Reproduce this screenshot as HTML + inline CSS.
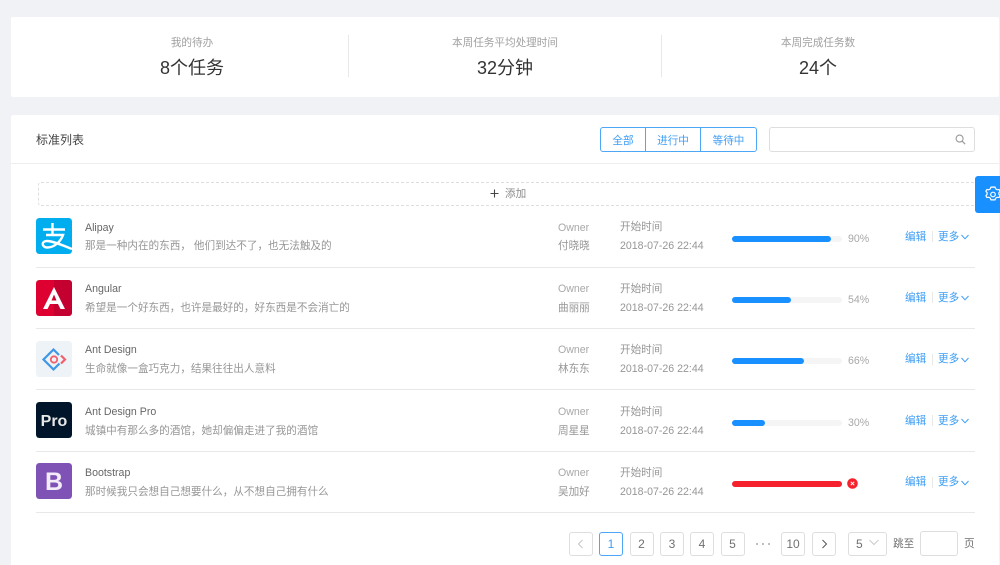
<!DOCTYPE html>
<html lang="zh"><head><meta charset="utf-8"><title>标准列表</title>
<style>
html,body{margin:0;padding:0;width:1000px;height:565px;overflow:hidden;background:#f0f2f5}
#w{position:absolute;left:0;top:0;width:1000px;height:565px;overflow:hidden;filter:blur(.3px);font-family:"Liberation Sans","Noto Sans CJK SC",sans-serif;font-size:10.6px;color:#969696}
.a{position:absolute;white-space:nowrap;line-height:14px}
.b{position:absolute;box-sizing:border-box}
.c{text-align:center}
.l{color:#3d9df5}
.p{position:absolute;box-sizing:border-box;top:532px;width:24px;height:24px;border:1px solid #dedede;border-radius:3px;text-align:center;line-height:22px;font-size:12px;color:#707070;background:#fff}
.bar{position:absolute;left:732px;width:110px;height:6px;border-radius:3px;background:#f5f5f5}
.bar i{display:block;height:6px;border-radius:3px;background:#1890ff}
.line{position:absolute;left:36px;width:939px;height:1px;background:#e8e8e8}
.av{position:absolute;left:36px;width:36px;height:36px;border-radius:3px;display:block}
.t{color:#666}
.o{color:#a8a8a8}
</style></head><body><div id="w">
<div class="b" style="left:11px;top:17px;width:988px;height:80px;background:#fff;border-radius:2px"></div>
<div class="b" style="left:348px;top:35px;width:1px;height:42px;background:#e8e8e8"></div>
<div class="b" style="left:661px;top:35px;width:1px;height:42px;background:#e8e8e8"></div>
<div class="a c" style="left:92px;width:200px;top:36px;color:#a0a0a0">我的待办</div>
<div class="a c" style="left:405px;width:200px;top:36px;color:#a0a0a0">本周任务平均处理时间</div>
<div class="a c" style="left:718px;width:200px;top:36px;color:#a0a0a0">本周完成任务数</div>
<div class="a c" style="left:92px;width:200px;top:57px;font-size:18px;line-height:22px;color:#333">8个任务</div>
<div class="a c" style="left:405px;width:200px;top:57px;font-size:18px;line-height:22px;color:#333">32分钟</div>
<div class="a c" style="left:718px;width:200px;top:57px;font-size:18px;line-height:22px;color:#333">24个</div>

<div class="b" style="left:11px;top:115px;width:988px;height:450px;background:#fff;border-radius:2px 2px 0 0"></div>
<div class="b" style="left:11px;top:163px;width:988px;height:1px;background:#eee"></div>
<div class="a" style="left:36px;top:132px;font-size:12px;line-height:16px;color:#444">标准列表</div>

<div class="b" style="left:600px;top:127px;width:157px;height:25px;border:1px solid #4ea6f7;border-radius:3px;background:#fff"></div>
<div class="b" style="left:645px;top:127px;width:1px;height:25px;background:#4ea6f7"></div>
<div class="b" style="left:700px;top:127px;width:1px;height:25px;background:#4ea6f7"></div>
<div class="a c l" style="left:601px;width:44px;top:134px">全部</div>
<div class="a c l" style="left:646px;width:54px;top:134px">进行中</div>
<div class="a c l" style="left:701px;width:55px;top:134px">等待中</div>

<div class="b" style="left:769px;top:127px;width:206px;height:25px;border:1px solid #dedede;border-radius:3px;background:#fff"></div>
<svg class="b" style="left:955px;top:134px" width="11" height="11" viewBox="0 0 11 11" fill="none" stroke="#999" stroke-width="1.1"><circle cx="4.600" cy="4.600" r="3.500"/><path d="M7.200 7.200L10.200 10.200"/></svg>

<div class="b" style="left:38px;top:182px;width:960px;height:24px;border:1px dashed #dedede;border-right:0;border-radius:3px 0 0 3px"></div>
<svg class="b" style="left:490px;top:189px" width="9" height="9" viewBox="0 0 9 9" stroke="#444" stroke-width="1.100"><path d="M4.500 0.500V8.500M0.500 4.500H8.500"/></svg>
<div class="a" style="left:505px;top:187px;color:#8a8a8a">添加</div>

<div class="b" style="left:975px;top:176px;width:25px;height:37px;background:#1890ff;border-radius:3px 0 0 3px"></div>
<svg class="b" style="left:985px;top:186px" width="15" height="17" viewBox="0 0 15 17" fill="none" stroke="#fff" stroke-width="1.200"><path d="M8 1l2 .1.700 1.800 1.500.9 1.900-.3 1 1.700-1.200 1.500v1.600l1.200 1.500-1 1.700-1.900-.3-1.500.9-.7 1.800H6l-.7-1.800-1.500-.9-1.900.3-1-1.700 1.200-1.500V6.700L.9 5.200l1-1.700 1.900.3 1.500-.9L6 1.100z"/><circle cx="8" cy="8.500" r="2.300"/></svg>

<!-- Row 1 -->
<svg class="av" style="top:218px" viewBox="0 0 36 36"><rect width="36" height="36" rx="3" fill="#00aeef"/><path d="M7 11.500H29M16.500 5V17M10 17H27C24.500 24 18 29.500 11.500 29.500 5.500 29.500 5 23 11 23 17 23 27 27.500 36 31" fill="none" stroke="#fff" stroke-width="2.400"/></svg>
<div class="a t" style="left:85px;top:220.500px">Alipay</div>
<div class="a" style="left:85px;top:239px">那是一种内在的东西， 他们到达不了，也无法触及的</div>
<div class="a o" style="left:558px;top:220.500px">Owner</div>
<div class="a" style="left:558px;top:239px">付晓晓</div>
<div class="a" style="left:620px;top:220px">开始时间</div>
<div class="a" style="left:620px;top:239px">2018-07-26 22:44</div>
<div class="bar" style="top:235.500px"><i style="width:99px"></i></div>
<div class="a o" style="left:848px;top:232px">90%</div>
<div class="a l" style="left:905px;top:229.500px">编辑</div>
<div class="b" style="left:932px;top:231px;width:1px;height:11px;background:#e8e8e8"></div>
<div class="a l" style="left:938px;top:229.500px">更多</div>
<svg class="b" style="left:961px;top:234px" width="8" height="6" viewBox="0 0 8 6" fill="none" stroke="#3d9df5"><path d="M.5 1L4 4.800 7.500 1"/></svg>
<div class="line" style="top:267px"></div>

<!-- Row 2 -->
<svg class="av" style="top:279.500px" viewBox="0 0 36 36"><rect width="36" height="36" rx="3" fill="#dd0031"/><path d="M18 0H33a3 3 0 0 1 3 3V33a3 3 0 0 1-3 3H18z" fill="#c3002f"/><path d="M18 7L29 29H24.500L22 24H14L11.500 29H7zM15.500 20.500H20.500L18 14.500z" fill="#fff" fill-rule="evenodd"/></svg>
<div class="a t" style="left:85px;top:281.500px">Angular</div>
<div class="a" style="left:85px;top:300.500px">希望是一个好东西，也许是最好的，好东西是不会消亡的</div>
<div class="a o" style="left:558px;top:281.500px">Owner</div>
<div class="a" style="left:558px;top:300.500px">曲丽丽</div>
<div class="a" style="left:620px;top:281.500px">开始时间</div>
<div class="a" style="left:620px;top:300.500px">2018-07-26 22:44</div>
<div class="bar" style="top:297px"><i style="width:59px"></i></div>
<div class="a o" style="left:848px;top:293px">54%</div>
<div class="a l" style="left:905px;top:290.500px">编辑</div>
<div class="b" style="left:932px;top:292px;width:1px;height:11px;background:#e8e8e8"></div>
<div class="a l" style="left:938px;top:290.500px">更多</div>
<svg class="b" style="left:961px;top:295px" width="8" height="6" viewBox="0 0 8 6" fill="none" stroke="#3d9df5"><path d="M.5 1L4 4.800 7.500 1"/></svg>
<div class="line" style="top:328px"></div>

<!-- Row 3 -->
<svg class="av" style="top:341px" viewBox="0 0 36 36"><rect width="36" height="36" rx="3" fill="#eef3f8"/><path d="M13.500 12.500L7.500 18.500 17.500 28.500 23.500 22.500" fill="none" stroke="#3f97e6" stroke-width="2.200"/><path d="M13 13L17.500 8.500 23 14" fill="none" stroke="#3f97e6" stroke-width="2.200"/><path d="M25 14.500L29 18.500 25 22.500" fill="none" stroke="#f0616c" stroke-width="2.200"/><circle cx="18" cy="18.500" r="3.200" fill="none" stroke="#f0616c" stroke-width="1.800"/></svg>
<div class="a t" style="left:85px;top:343px">Ant Design</div>
<div class="a" style="left:85px;top:362px">生命就像一盒巧克力，结果往往出人意料</div>
<div class="a o" style="left:558px;top:343px">Owner</div>
<div class="a" style="left:558px;top:362px">林东东</div>
<div class="a" style="left:620px;top:343px">开始时间</div>
<div class="a" style="left:620px;top:362px">2018-07-26 22:44</div>
<div class="bar" style="top:358px"><i style="width:72px"></i></div>
<div class="a o" style="left:848px;top:354px">66%</div>
<div class="a l" style="left:905px;top:352px">编辑</div>
<div class="b" style="left:932px;top:353.500px;width:1px;height:11px;background:#e8e8e8"></div>
<div class="a l" style="left:938px;top:352px">更多</div>
<svg class="b" style="left:961px;top:356.500px" width="8" height="6" viewBox="0 0 8 6" fill="none" stroke="#3d9df5"><path d="M.5 1L4 4.800 7.500 1"/></svg>
<div class="line" style="top:389px"></div>

<!-- Row 4 -->
<svg class="av" style="top:402px" viewBox="0 0 36 36"><rect width="36" height="36" rx="3" fill="#001529"/><text x="18" y="24" text-anchor="middle" font-family="Liberation Sans" font-size="16" font-weight="700" fill="#e8e8e8">Pro</text></svg>
<div class="a t" style="left:85px;top:404.500px">Ant Design Pro</div>
<div class="a" style="left:85px;top:423.500px">城镇中有那么多的酒馆，她却偏偏走进了我的酒馆</div>
<div class="a o" style="left:558px;top:404.500px">Owner</div>
<div class="a" style="left:558px;top:423.500px">周星星</div>
<div class="a" style="left:620px;top:404.500px">开始时间</div>
<div class="a" style="left:620px;top:423.500px">2018-07-26 22:44</div>
<div class="bar" style="top:419.500px"><i style="width:33px"></i></div>
<div class="a o" style="left:848px;top:415.500px">30%</div>
<div class="a l" style="left:905px;top:413.500px">编辑</div>
<div class="b" style="left:932px;top:415px;width:1px;height:11px;background:#e8e8e8"></div>
<div class="a l" style="left:938px;top:413.500px">更多</div>
<svg class="b" style="left:961px;top:418px" width="8" height="6" viewBox="0 0 8 6" fill="none" stroke="#3d9df5"><path d="M.5 1L4 4.800 7.500 1"/></svg>
<div class="line" style="top:451px"></div>

<!-- Row 5 -->
<svg class="av" style="top:463px" viewBox="0 0 36 36"><rect width="36" height="36" rx="3" fill="#7f52b5"/><text x="18" y="27" text-anchor="middle" font-family="Liberation Sans" font-size="25" font-weight="700" fill="#f3edf9">B</text></svg>
<div class="a t" style="left:85px;top:465.500px">Bootstrap</div>
<div class="a" style="left:85px;top:484.500px">那时候我只会想自己想要什么，从不想自己拥有什么</div>
<div class="a o" style="left:558px;top:466px">Owner</div>
<div class="a" style="left:558px;top:484.500px">吴加好</div>
<div class="a" style="left:620px;top:466px">开始时间</div>
<div class="a" style="left:620px;top:484.500px">2018-07-26 22:44</div>
<div class="bar" style="top:481px"><i style="width:110px;background:#f5222d"></i></div>
<svg class="b" style="left:847px;top:478px" width="11" height="11" viewBox="0 0 11 11"><circle cx="5.500" cy="5.500" r="5.300" fill="#f5222d"/><path d="M3.800 3.800L7.200 7.200M7.200 3.800L3.800 7.200" stroke="#fff"/></svg>
<div class="a l" style="left:905px;top:475px">编辑</div>
<div class="b" style="left:932px;top:476.500px;width:1px;height:11px;background:#e8e8e8"></div>
<div class="a l" style="left:938px;top:475px">更多</div>
<svg class="b" style="left:961px;top:479.500px" width="8" height="6" viewBox="0 0 8 6" fill="none" stroke="#3d9df5"><path d="M.5 1L4 4.800 7.500 1"/></svg>
<div class="line" style="top:512px"></div>

<!-- Pagination -->
<div class="p" style="left:569px"><svg width="7" height="10" viewBox="0 0 7 10" fill="none" stroke="#c4c4c4" style="margin-top:6px;display:block;margin-left:7px"><path d="M5.500 1L1.500 5 5.500 9"/></svg></div>
<div class="p" style="left:599px;border-color:#4ea6f7;color:#3d9df5">1</div>
<div class="p" style="left:629.500px">2</div>
<div class="p" style="left:660px">3</div>
<div class="p" style="left:690px">4</div>
<div class="p" style="left:720.500px">5</div>
<div class="b" style="left:756px;top:543px;width:14px;height:2px;background:radial-gradient(circle at 1px 1px,#aaa 1px,transparent 1px) 0 0/6px 2px"></div>
<div class="p" style="left:781px">10</div>
<div class="p" style="left:811.500px"><svg width="7" height="10" viewBox="0 0 7 10" fill="none" stroke="#555" style="margin-top:6px;display:block;margin-left:8px"><path d="M1.500 1L5.500 5 1.500 9"/></svg></div>
<div class="b" style="left:848px;top:532px;width:39px;height:24px;border:1px solid #dedede;border-radius:3px;background:#fff"></div>
<div class="a" style="left:856px;top:537px;font-size:12px;color:#707070">5</div>
<svg class="b" style="left:869px;top:539px" width="10" height="7" viewBox="0 0 10 7" fill="none" stroke="#ccc"><path d="M.5 1L5 5.500 9.500 1"/></svg>
<div class="a" style="left:893px;top:537px;color:#707070">跳至</div>
<div class="b" style="left:920px;top:531px;width:38px;height:25px;border:1px solid #dedede;border-radius:3px;background:#fff"></div>
<div class="a" style="left:964px;top:537px;color:#707070">页</div>
</div></body></html>
